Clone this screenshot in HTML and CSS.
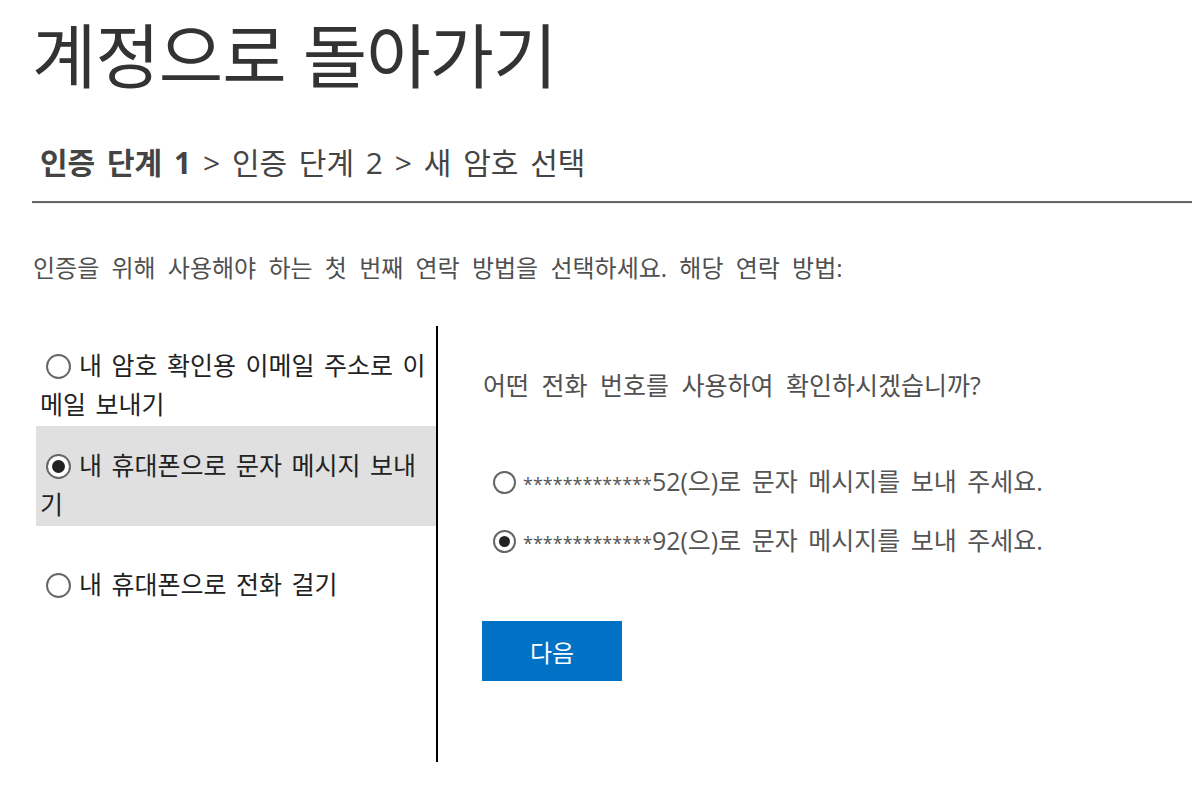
FILE: index.html
```html
<!DOCTYPE html>
<html lang="ko">
<head>
<meta charset="utf-8">
<title>계정으로 돌아가기</title>
<link rel="stylesheet" href="styles.css">
</head>
<body>
<div class="page">
  <h1 class="title">계정으로 돌아가기</h1>
  <div class="steps"><span class="step-current">인증 단계 1</span> &gt; 인증 단계 2 &gt; 새 암호 선택</div>
  <div class="rule"></div>
  <p class="intro">인증을 위해 사용해야 하는 첫 번째 연락 방법을 선택하세요. 해당 연락 방법:</p>
  <div class="columns">
    <div class="methods">
      <div class="method">
        <span class="radio"></span>내 암호 확인용 이메일 주소로 이<br>메일 보내기
      </div>
      <div class="method selected">
        <span class="radio on"></span>내 휴대폰으로 문자 메시지 보내<br>기
      </div>
      <div class="method single">
        <span class="radio"></span>내 휴대폰으로 전화 걸기
      </div>
    </div>
    <div class="detail">
      <p class="question">어떤 전화 번호를 사용하여 확인하시겠습니까?</p>
      <div class="phones">
        <div class="phone"><span class="radio small"></span><span class="stars">*************</span>52(으)로 문자 메시지를 보내 주세요.</div>
        <div class="phone"><span class="radio small on"></span><span class="stars">*************</span>92(으)로 문자 메시지를 보내 주세요.</div>
      </div>
      <button class="next">다음</button>
    </div>
  </div>
</div>
</body>
</html>
```
FILE: styles.css
```css
html, body {
  margin: 0;
  padding: 0;
  background: #ffffff;
}
body {
  font-family: "Open Sans", "Noto Sans CJK KR", sans-serif;
  color: #333333;
}
.page {
  padding-left: 32px;
}
.title {
  margin: 0;
  padding-top: 14px;
  font-size: 70px;
  font-weight: 400;
  line-height: 84px;
  color: #333333;
  letter-spacing: -1px;
}
.steps {
  margin-top: 45px;
  padding-left: 8px;
  font-size: 30px;
  line-height: 40px;
  color: #444444;
  word-spacing: 4px;
}
.step-current {
  font-weight: 700;
}
.rule {
  margin-top: 18px;
  border-top: 2px solid #666666;
  border-bottom: 1px solid #ececec;
}
.intro {
  margin: 48px 0 0 1px;
  font-size: 24px;
  line-height: 32px;
  color: #505050;
  word-spacing: 6px;
}
.columns {
  display: flex;
  margin-top: 42px;
  height: 436px;
}
.methods {
  width: 400px;
  padding-left: 4px;
  border-right: 2px solid #000000;
}
.method {
  padding: 20px 0 2px 4px;
  font-size: 25px;
  line-height: 39px;
  color: #222222;
  word-spacing: 3px;
  height: 78px;
  white-space: nowrap;
}
.method.selected {
  background: #e0e0e0;
}
.method.single {
  margin-top: 19px;
}
.radio {
  display: inline-block;
  box-sizing: border-box;
  width: 25px;
  height: 25px;
  border: 2px solid #666666;
  border-radius: 50%;
  background: #ffffff;
  vertical-align: -4px;
  margin: 0 8px 0 6px;
  position: relative;
}
.radio.on::after {
  content: "";
  position: absolute;
  left: 4px;
  top: 4px;
  width: 13px;
  height: 13px;
  border-radius: 50%;
  background: #222222;
}
.radio.small {
  width: 23px;
  height: 23px;
  margin: 0 7px 0 10px;
  vertical-align: -3px;
}
.radio.small.on::after {
  left: 4px;
  top: 4px;
  width: 11px;
  height: 11px;
}
.detail {
  padding-left: 44px;
}
.question {
  margin: 44px 0 0 1px;
  font-size: 25px;
  line-height: 30px;
  color: #505050;
  word-spacing: 6px;
}
.phones {
  margin-top: 66px;
  padding-left: 1px;
}
.phone {
  font-size: 25px;
  line-height: 30px;
  color: #555555;
  height: 59px;
  word-spacing: 4px;
  white-space: nowrap;
}
.stars {
  font-size: 18px;
  letter-spacing: 0;
}
.next {
  margin-top: 37px;
  width: 140px;
  height: 60px;
  border: none;
  background: #0072c6;
  color: #ffffff;
  font-family: "Open Sans", "Noto Sans CJK KR", sans-serif;
  font-size: 24px;
  padding: 0;
}
```
